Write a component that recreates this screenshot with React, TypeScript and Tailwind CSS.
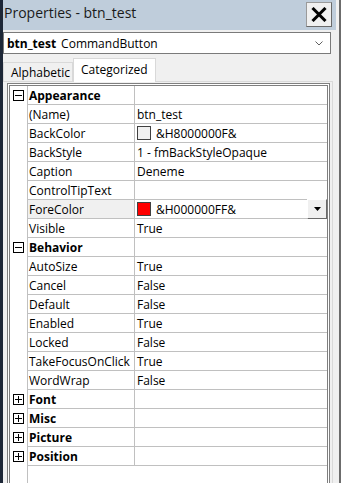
import React from "react";

type Row =
  | { kind: "cat"; label: string; open: boolean }
  | { kind: "prop"; name: string; value: string; swatch?: string; selected?: boolean };

const rows: Row[] = [
  { kind: "cat", label: "Appearance", open: true },
  { kind: "prop", name: "(Name)", value: "btn_test" },
  { kind: "prop", name: "BackColor", value: "&H8000000F&", swatch: "#f0f0f0" },
  { kind: "prop", name: "BackStyle", value: "1 - fmBackStyleOpaque" },
  { kind: "prop", name: "Caption", value: "Deneme" },
  { kind: "prop", name: "ControlTipText", value: "" },
  { kind: "prop", name: "ForeColor", value: "&H000000FF&", swatch: "#ff0000", selected: true },
  { kind: "prop", name: "Visible", value: "True" },
  { kind: "cat", label: "Behavior", open: true },
  { kind: "prop", name: "AutoSize", value: "True" },
  { kind: "prop", name: "Cancel", value: "False" },
  { kind: "prop", name: "Default", value: "False" },
  { kind: "prop", name: "Enabled", value: "True" },
  { kind: "prop", name: "Locked", value: "False" },
  { kind: "prop", name: "TakeFocusOnClick", value: "True" },
  { kind: "prop", name: "WordWrap", value: "False" },
  { kind: "cat", label: "Font", open: false },
  { kind: "cat", label: "Misc", open: false },
  { kind: "cat", label: "Picture", open: false },
  { kind: "cat", label: "Position", open: false },
];

function ToggleBox({ open }: { open: boolean }) {
  return (
    <svg width="11" height="11" viewBox="0 0 11 11" className="block">
      <rect x="0.5" y="0.5" width="10" height="10" fill="#fff" stroke="#000" strokeWidth="1" />
      <line x1="2" y1="5.5" x2="9" y2="5.5" stroke="#000" strokeWidth="1" />
      {!open && <line x1="5.5" y1="2" x2="5.5" y2="9" stroke="#000" strokeWidth="1" />}
    </svg>
  );
}

export default function App() {
  return (
    <div
      className="w-[341px] h-[483px] bg-[#f0f0f0] border-l-[3px] border-l-[#1d2737] border-r-2 border-r-[#6c6c6c] overflow-hidden flex flex-col text-black"
      style={{ fontFamily: '"Open Sans", "Noto Sans", sans-serif' }}
    >
      {/* Title bar */}
      <div className="h-[30px] mr-[3px] bg-[#bfcddb] flex items-start">
        <span className="pl-px pt-[3px] text-[14px] leading-[20px] text-[#1a1a1a]">Properties - btn_test</span>
        <div className="ml-auto mr-[4px] mt-[2px] w-[26px] h-[25px] bg-[#f0f0f0] border border-[#9a9a9a] border-r-[#6a6a6a] border-b-[#6a6a6a] flex items-center justify-center">
          <svg width="16" height="15" viewBox="0 0 16 15">
            <line x1="1.5" y1="1" x2="14.5" y2="14" stroke="#000" strokeWidth="3" />
            <line x1="14.5" y1="1" x2="1.5" y2="14" stroke="#000" strokeWidth="3" />
          </svg>
        </div>
      </div>

      {/* Object dropdown */}
      <div className="mt-[2px] mr-[8px] h-[22px] bg-white border border-[#7a7a7a] flex items-center pl-[3px] pr-[7px]">
        <span className="text-[12px] leading-[18px] font-bold pt-px">btn_test</span>
        <span className="text-[12px] leading-[18px] ml-[5px] pt-px">CommandButton</span>
        <svg className="ml-auto" width="8" height="5" viewBox="0 0 8 5">
          <polyline points="0.5,0.5 4,4 7.5,0.5" fill="none" stroke="#606060" strokeWidth="1" />
        </svg>
      </div>

      {/* Tabs */}
      <div className="mt-[4px] h-[23px] flex items-end">
        <div className="h-[19px] w-[70px] bg-[#f0f0f0] border border-b-0 border-[#d9d9d9] pl-[7px] pt-px text-[12px] leading-[18px]">
          Alphabetic
        </div>
        <div className="h-[24px] w-[83px] bg-white border border-b-0 border-[#d9d9d9] pl-[7px] pt-[2px] text-[12px] leading-[18px] relative z-10 -mb-px">
          Categorized
        </div>
      </div>

      {/* Tab panel */}
      <div className="flex-1 mr-[6px] border border-b-0 border-l-0 border-[#d9d9d9] pt-[1px] pl-[4px] pr-[2px] flex flex-col">
        <div className="flex-1 bg-white border-[3px] border-b-0 border-double border-[#7f7f7f] flex flex-col">
          {rows.map((r, i) => (
            <div key={i} className="flex h-[19px]">
              <div className="w-[18px] shrink-0 border-r border-[#c0c0c0] flex items-center pl-[3px]">
                {r.kind === "cat" && <ToggleBox open={r.open} />}
              </div>
              {r.kind === "cat" ? (
                <>
                  <div className="w-[107px] shrink-0 border-r border-b border-[#c0c0c0] pl-px pt-px text-[12px] leading-[17px] font-bold">
                    {r.label}
                  </div>
                  <div className="flex-1 border-b border-[#c0c0c0]" />
                </>
              ) : (
                <>
                  <div
                    className={
                      "w-[107px] shrink-0 border-r border-b border-[#c0c0c0] pl-px pt-px text-[12px] leading-[17px] whitespace-nowrap overflow-hidden " +
                      (r.selected ? "bg-[#f0f0f0]" : "")
                    }
                  >
                    {r.name}
                  </div>
                  <div className="flex-1 border-b border-[#c0c0c0] pl-[2px] flex items-center text-[12px] leading-[17px] relative whitespace-nowrap">
                    {r.swatch && (
                      <span
                        className="w-[14px] h-[14px] border border-[#404040] mr-[5px] shrink-0"
                        style={{ backgroundColor: r.swatch }}
                      />
                    )}
                    <span className="pt-px">{r.value}</span>
                    {r.selected && (
                      <div className="absolute right-0 -top-px w-[20px] h-[20px] bg-[#f0f0f0] border border-white border-r-[#696969] border-b-[#696969] flex items-center justify-center">
                        <svg width="7" height="4" viewBox="0 0 7 4">
                          <polygon points="0,0 7,0 3.5,4" fill="#000" />
                        </svg>
                      </div>
                    )}
                  </div>
                </>
              )}
            </div>
          ))}
          <div className="flex-1 flex">
            <div className="w-[18px] shrink-0 border-r border-[#c0c0c0]" />
          </div>
        </div>
      </div>
    </div>
  );
}
